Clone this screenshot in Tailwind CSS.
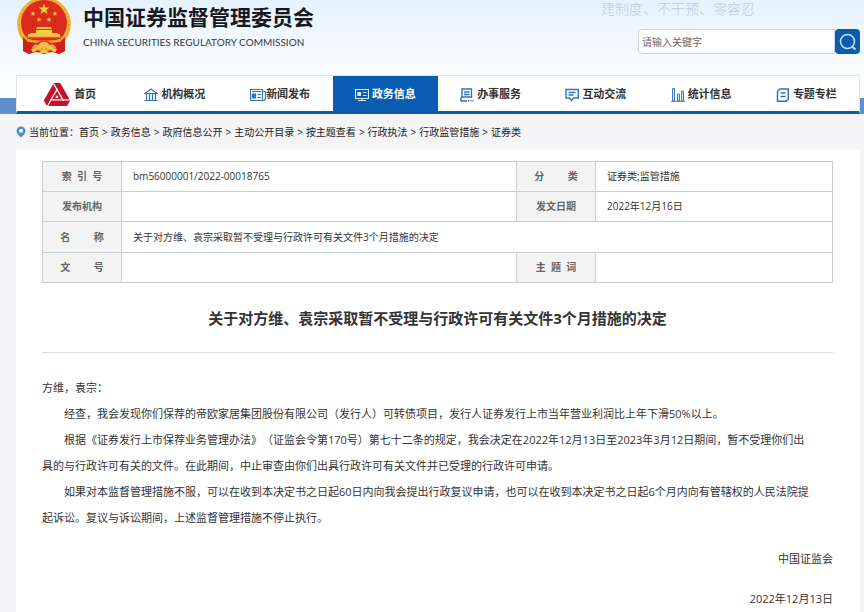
<!DOCTYPE html>
<html lang="zh-CN">
<head>
  <meta charset="UTF-8" />
  <meta name="viewport" content="width=device-width, initial-scale=1.0"/>
  <title>关于对方维、袁宗采取暂不受理与行政许可有关文件3个月措施的决定</title>
  <script src="https://cdn.jsdelivr.net/npm/@tailwindcss/browser@4"></script>
</head>
<body class="min-h-screen bg-[#f5f5f7] font-['Open_Sans','Noto_Sans_CJK_SC',sans-serif] text-[#333] [text-spacing-trim:space-all]">

  <!-- Header -->
  <header class="bg-linear-to-b from-[#e6f2ff] to-[#fbfdff] flex justify-between h-[75px] pl-4 pr-1">
    <a href="#" class="flex items-start gap-[11px]">
      <svg class="w-14 h-14" viewBox="0 0 56 56" aria-hidden="true">
        <path d="M7 37 L7 51 L13 54 L20 52 L28 54 L36 52 L43 54 L49 51 L49 37Z" fill="#d3201c"/>
        <circle cx="28" cy="24" r="27" fill="#f0b63a"/>
        <circle cx="28" cy="24" r="25" fill="none" stroke="#d9952a" stroke-width="1" stroke-dasharray="2 2"/>
        <circle cx="28" cy="23" r="23" fill="#dc2a1d"/>
        <path d="M28 3.500 L29.500 7.500 L33.500 7.600 L30.300 10.100 L31.500 14 L28 11.700 L24.500 14 L25.700 10.100 L22.500 7.600 L26.500 7.500Z" fill="#f7c945"/>
        <g fill="#f7c945">
          <path id="star" d="M17 11 L17.700 12.700 L19.500 12.800 L18.100 14 L18.600 15.800 L17 14.800 L15.400 15.800 L15.900 14 L14.500 12.800 L16.300 12.700Z"/>
          <use href="#star" x="22"/>
          <use href="#star" x="6" y="6"/>
          <use href="#star" x="16" y="6"/>
          <path d="M21 27h14l1 2h-16zM20 30h16v3h6v1h2v3H12v-3h2v-1h6z"/>
        </g>
        <path d="M8 37h40" stroke="#e79a2b"/>
        <path d="M8 38 Q28 44 48 38 L45 43 Q37 45 33 42 Q28 39 23 42 Q19 45 11 43Z" fill="#e9a52f"/>
        <path d="M7 37 L7 51 L13 54 L17 46 L21 43 L12 42Z M49 37 L49 51 L43 54 L39 46 L35 43 L44 42Z" fill="#d3201c"/>
        <path d="M15 49 L20 48 L24 43 Q28 40 32 43 L36 48 L41 49 L39 53 L35 50 L31 48 Q28 46 25 48 L21 50 L17 53Z" fill="#f4c04a"/>
        <path d="M22 53 L28 49 L34 53Z" fill="#f4c04a"/>
      </svg>
      <span class="block pt-[3px]">
        <span class="block text-[21px] leading-7 font-bold text-[#16191d]">中国证券监督管理委员会</span>
        <span class="block text-[10px] leading-[22px] font-['Lato'] text-[#33383e]">CHINA SECURITIES REGULATORY COMMISSION</span>
      </span>
    </a>
    <div class="flex flex-col w-[259px]">
      <p class="h-[29px] text-sm leading-[18px] text-[#bccbde] font-light whitespace-nowrap">建制度、不干预、零容忍</p>
      <form class="flex h-[25px] w-[222px] self-end">
        <label for="keyword" class="sr-only">搜索</label>
        <input id="keyword" type="text" placeholder="请输入关键字" class="flex-1 min-w-0 bg-white border border-[#ccd3da] rounded-l-sm px-[3px] text-[10px] leading-4 placeholder:text-[#666]"/>
        <button type="submit" aria-label="搜索" class="w-[25px] bg-[#0c5bb0] rounded-sm flex items-center justify-center">
          <svg class="w-[18px] h-[18px]" viewBox="0 0 18 18" fill="none" stroke="#c9e3ff" stroke-width="1.500"><circle cx="8.500" cy="8.500" r="7"/><path d="M13 13.500l3.500 3" stroke-width="2"/></svg>
        </button>
      </form>
    </div>
  </header>

  <!-- Main menu -->
  <div class="bg-[linear-gradient(#fbfdff_23px,#5f8fca_23px)] pl-4 pr-1">
    <nav class="grid grid-cols-8 h-[39px] bg-white border-t border-x border-t-[#dfe3e8] border-x-[#dfe3e8] border-b-3 border-b-[#0d5aa7] text-[11px] font-bold whitespace-nowrap">
      <a href="#" class="flex items-center justify-center gap-[3px] pt-0.5">
        <svg class="w-7 h-[26px]" viewBox="0 0 28 26">
          <path d="M11.400 2 L16.600 2 L26.100 18.500 L23.500 23 L4.500 23 L1.900 18.500Z" fill="#c4122a" stroke="#c4122a" stroke-width="2" stroke-linejoin="round"/>
          <g stroke="#fff" stroke-width="1.200">
            <path id="fold" d="M10.500 1.500 L20.500 18.900"/>
            <use href="#fold" transform="rotate(120 14 14.500)"/>
            <use href="#fold" transform="rotate(240 14 14.500)"/>
          </g>
          <path d="M14 13l1.700 3h-3.400z" fill="#fff"/>
        </svg>首页</a>
      <a href="#" class="flex items-center justify-center gap-[3px] pt-0.5">
        <svg class="w-[14px] h-[14px]" viewBox="0 0 14 14" fill="none" stroke="#2f74b8" stroke-width="1.200"><path d="M1 5.500 L7 1 L13 5.500Z M2.500 6v6 M5.500 6v6 M8.500 6v6 M11.500 6v6 M0.500 12.500h13"/></svg>机构概况</a>
      <a href="#" class="flex items-center justify-center pt-0.5">
        <svg class="w-4 h-[14px]" viewBox="0 0 16 14" fill="none" stroke="#2f74b8" stroke-width="1.200"><path d="M0.500 1.500h12v11h-12z M12.500 3.500h3v7.500l-1.500 1.500h-2 M2 3.500h9 M7.500 6.500h3.500 M7.500 9.500h3.500"/><path d="M2.500 6h3v4h-3z" fill="#2f74b8"/></svg>新闻发布</a>
      <a href="#" class="flex items-center justify-center gap-[3px] pt-0.5 bg-[#0b5cb3] text-white">
        <svg class="w-[14px] h-[14px]" viewBox="0 0 14 14" fill="none" stroke="#d7ebff" stroke-width="1.200"><path d="M0.500 1.500h13v9h-13z M7 10.500v2 M3 12.500h8 M8 4.500h3.500 M8 7.500h3.500"/><path d="M3 4.500h2.500v3h-2.500z" fill="#d7ebff"/></svg>政务信息</a>
      <a href="#" class="flex items-center justify-center gap-[3px] pt-0.5">
        <svg class="w-[14px] h-[14px]" viewBox="0 0 14 14" fill="none" stroke="#2f74b8" stroke-width="1.400"><path d="M11.500 8.500V1H2v8 M4 4h5.500 M4 6.500h5.500 M2 9h10 M2 9l-1 1v3h6"/><path d="M8 12.800h1.500 M10.500 12.800h1 M12.500 12.800h1"/></svg>办事服务</a>
      <a href="#" class="flex items-center justify-center gap-[3px] pt-0.5">
        <svg class="w-[14px] h-[14px]" viewBox="0 0 14 14" fill="none" stroke="#2f74b8" stroke-width="1.400"><path d="M1 1.500h12.300v8.500H8.500l-2 2.500-2-2.500H1z M3.500 4.500h7 M3.500 7h5"/></svg>互动交流</a>
      <a href="#" class="flex items-center justify-center gap-[3px] pt-0.5">
        <svg class="w-[14px] h-[14px]" viewBox="0 0 14 14" fill="#cfe2f5" stroke="#3d7fc4"><path d="M1.500 0.500h2v12.500h-2z M6.500 6h2v7h-2z M10.500 3h2v10h-2z M0 13.300h14"/></svg>统计信息</a>
      <a href="#" class="flex items-center justify-center gap-[3px] pt-0.5">
        <svg class="w-[14px] h-[14px]" viewBox="0 0 14 14" fill="none" stroke="#2f74b8" stroke-width="1.500"><path d="M4 1h8.300v10l-2 2.200H1.500V3.500z M4.500 5h5 M4.500 8.500h5"/></svg>专题专栏</a>
    </nav>
  </div>

  <!-- Breadcrumb -->
  <div class="flex items-center h-9 pl-4 text-[10px] text-[#222]">
    <svg class="w-[10px] h-3 mr-[3px]" viewBox="0 0 10 12"><path d="M5 0.500a4.500 4.500 0 0 1 4.500 4.500c0 2.500-2.500 4.500-4.500 6.500-2-2-4.500-4-4.500-6.500a4.500 4.500 0 0 1 4.500-4.500z" fill="#4a90c8"/><circle cx="5" cy="4.800" r="2" fill="#fff"/></svg>
    <span>当前位置：</span>
    <ol class="flex gap-[3px]">
      <li><a href="#">首页</a></li>
      <li>&gt;</li>
      <li><a href="#">政务信息</a></li>
      <li>&gt;</li>
      <li><a href="#">政府信息公开</a></li>
      <li>&gt;</li>
      <li><a href="#">主动公开目录</a></li>
      <li>&gt;</li>
      <li><a href="#">按主题查看</a></li>
      <li>&gt;</li>
      <li><a href="#">行政执法</a></li>
      <li>&gt;</li>
      <li><a href="#">行政监管措施</a></li>
      <li>&gt;</li>
      <li><a href="#">证券类</a></li>
    </ol>
  </div>

  <!-- Document -->
  <main class="ml-4 mr-1 bg-white pl-[26px] pr-[27px] pt-[11px]">
    <table class="w-full table-fixed border-collapse text-[10px] text-left">
      <colgroup>
        <col class="w-[10%]"/>
        <col class="w-[50%]"/>
        <col class="w-[10%]"/>
        <col class="w-[30%]"/>
      </colgroup>
      <tbody>
        <tr class="h-[30px]">
          <th class="border border-[#c9d0d4] bg-[#f3f3f3] text-center text-[#666] whitespace-pre">索  引  号</th>
          <td class="border border-[#c9d0d4] px-[11px]">bm56000001/2022-00018765</td>
          <th class="border border-[#c9d0d4] bg-[#f3f3f3] text-center text-[#666] whitespace-pre">分         类</th>
          <td class="border border-[#c9d0d4] px-[11px]">证券类;监管措施</td>
        </tr>
        <tr class="h-[30px]">
          <th class="border border-[#c9d0d4] bg-[#f3f3f3] text-center text-[#666]">发布机构</th>
          <td class="border border-[#c9d0d4] px-[11px]"></td>
          <th class="border border-[#c9d0d4] bg-[#f3f3f3] text-center text-[#666]">发文日期</th>
          <td class="border border-[#c9d0d4] px-[11px]">2022年12月16日</td>
        </tr>
        <tr class="h-[31px]">
          <th class="border border-[#c9d0d4] bg-[#f3f3f3] text-center text-[#666] whitespace-pre">名         称</th>
          <td colspan="3" class="border border-[#c9d0d4] px-[11px]">关于对方维、袁宗采取暂不受理与行政许可有关文件3个月措施的决定</td>
        </tr>
        <tr class="h-[30px]">
          <th class="border border-[#c9d0d4] bg-[#f3f3f3] text-center text-[#666] whitespace-pre">文         号</th>
          <td class="border border-[#c9d0d4] px-[11px]"></td>
          <th class="border border-[#c9d0d4] bg-[#f3f3f3] text-center text-[#666] whitespace-pre">主  题  词</th>
          <td class="border border-[#c9d0d4] px-[11px]"></td>
        </tr>
      </tbody>
    </table>

    <h1 class="pt-[23px] pb-[22px] text-center text-[15px] leading-6 font-bold border-b border-[#ddd]">关于对方维、袁宗采取暂不受理与行政许可有关文件3个月措施的决定</h1>

    <article class="pt-[22px] pb-4 text-[11px] leading-[26px]">
      <p>方维，袁宗：</p>
      <p class="indent-[2em]">经查，我会发现你们保荐的帝欧家居集团股份有限公司（发行人）可转债项目，发行人证券发行上市当年营业利润比上年下滑50%以上。</p>
      <p class="indent-[2em]">根据《证券发行上市保荐业务管理办法》（证监会令第170号）第七十二条的规定，我会决定在2022年12月13日至2023年3月12日期间，暂不受理你们出<br/>具的与行政许可有关的文件。在此期间，中止审查由你们出具行政许可有关文件并已受理的行政许可申请。</p>
      <p class="indent-[2em]">如果对本监督管理措施不服，可以在收到本决定书之日起60日内向我会提出行政复议申请，也可以在收到本决定书之日起6个月内向有管辖权的人民法院提<br/>起诉讼。复议与诉讼期间，上述监督管理措施不停止执行。</p>
      <p class="mt-[15px] text-right">中国证监会</p>
      <p class="mt-[14px] text-right">2022年12月13日</p>
    </article>
  </main>

</body>
</html>
